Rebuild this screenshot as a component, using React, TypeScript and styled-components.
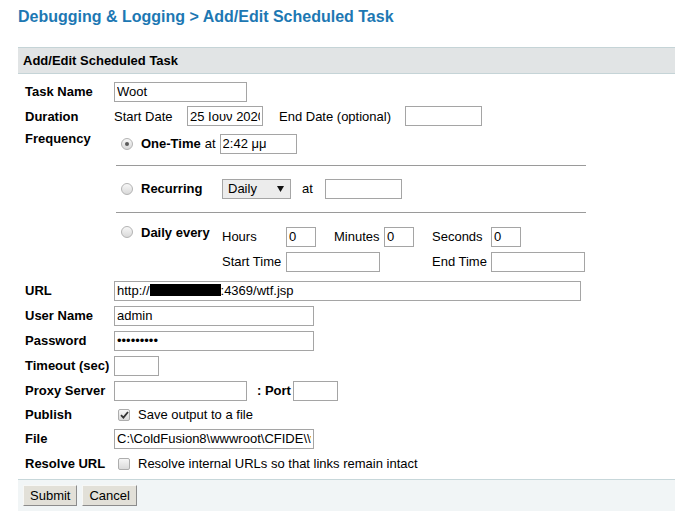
import styled, { createGlobalStyle } from "styled-components";

const GlobalStyle = createGlobalStyle`
  body {
    margin: 0;
    background: #fff;
    font-family: "Liberation Sans", Arial, sans-serif;
    font-size: 13px;
    color: #000;
  }
`;

const Page = styled.div`
  padding-left: 18px;
`;

const Title = styled.h1`
  margin: 0;
  padding-top: 7px;
  height: 40px;
  font-size: 16px;
  line-height: 20px;
  font-weight: bold;
  color: #1d78b3;
`;

const PanelHeader = styled.div`
  height: 25px;
  line-height: 25px;
  padding-left: 5px;
  font-weight: bold;
  background: #e1e4e5;
  border-top: 1px solid #c5d4d7;
  border-bottom: 1px solid #c5d4d7;
`;

const Body = styled.div`
  padding: 5px 0 3px 7px;
`;

const Row = styled.div<{ $h?: number; $top?: boolean }>`
  display: grid;
  grid-template-columns: 89px 1fr;
  align-items: ${(p) => (p.$top ? "start" : "center")};
  height: ${(p) => (p.$h ? `${p.$h}px` : "auto")};
  min-height: ${(p) => p.$h ?? 25}px;
`;

const Label = styled.div<{ $pt?: number }>`
  font-weight: bold;
  line-height: 15px;
  padding-top: ${(p) => p.$pt ?? 0}px;
`;

const Field = styled.div`
  display: flex;
  align-items: center;
`;

const TextInput = styled.input<{ $w: number }>`
  box-sizing: border-box;
  width: ${(p) => p.$w}px;
  height: 20px;
  margin: 0;
  padding: 0 2px;
  border: 1px solid #a5a5a5;
  background: #fff;
  color: #000;
  font: 13px "Liberation Sans", Arial, sans-serif;
  outline: none;
`;

const TextBox = styled.div<{ $w: number }>`
  box-sizing: border-box;
  width: ${(p) => p.$w}px;
  height: 20px;
  padding: 0 2px;
  border: 1px solid #a5a5a5;
  line-height: 18px;
  white-space: nowrap;
  overflow: hidden;
`;

const Redacted = styled.span`
  display: inline-block;
  width: 71px;
  height: 12px;
  background: #000;
  vertical-align: -1px;
`;

const Caption = styled.span<{ $w?: number; $ml?: number; $bold?: boolean }>`
  flex: none;
  width: ${(p) => (p.$w ? `${p.$w}px` : "auto")};
  margin-left: ${(p) => p.$ml ?? 0}px;
  font-weight: ${(p) => (p.$bold ? "bold" : "normal")};
  white-space: nowrap;
`;

/* frequency block */

const Options = styled.div`
  padding: 3px 0 4px;
`;

const Option = styled.div<{ $top?: boolean }>`
  display: flex;
  align-items: ${(p) => (p.$top ? "flex-start" : "center")};
  min-height: 25px;
`;

const OptionLabel = styled.div<{ $w?: number }>`
  flex: none;
  box-sizing: border-box;
  display: flex;
  align-items: center;
  width: ${(p) => (p.$w ? `${p.$w}px` : "auto")};
  height: 18px;
  padding-left: 7px;
  font-weight: bold;
  white-space: nowrap;
`;

const Radio = styled.span<{ $on?: boolean }>`
  flex: none;
  box-sizing: border-box;
  position: relative;
  width: 12px;
  height: 12px;
  margin-right: 8px;
  border-radius: 50%;
  border: 1px solid #b3b3b3;
  background: linear-gradient(#f7f7f7, #d9d9d9);
  &::after {
    content: "";
    display: ${(p) => (p.$on ? "block" : "none")};
    position: absolute;
    left: 3px;
    top: 3px;
    width: 4px;
    height: 4px;
    border-radius: 50%;
    background: #5a5a5a;
  }
`;

const Divider = styled.div<{ $mt: number }>`
  width: 470px;
  height: 1px;
  margin: ${(p) => p.$mt}px 0 10px 2px;
  background: #9a9a9a;
`;

const Select = styled.div`
  box-sizing: border-box;
  display: flex;
  align-items: center;
  justify-content: space-between;
  width: 69px;
  height: 20px;
  padding: 0 6px 0 5px;
  border: 1px solid #a5a5a5;
  background: #ececec;
`;

const DailyGrid = styled.div`
  display: grid;
  grid-template-columns: 64px 48px 50px 48px 59px 100px;
  grid-auto-rows: 25px;
  align-items: center;
  margin-top: 1px;
`;

const Span3 = styled.div`
  grid-column: span 3;
  display: flex;
`;

/* checkboxes + footer */

const Check = styled.span`
  flex: none;
  box-sizing: border-box;
  display: flex;
  align-items: center;
  justify-content: center;
  width: 12px;
  height: 12px;
  margin: 0 8px 0 4px;
  border-radius: 2px;
  border: 1px solid #adadad;
  background: linear-gradient(#f6f6f6, #dadada);
`;

const Footer = styled.div`
  display: flex;
  gap: 5px;
  padding: 5px 0 6px 5px;
  background: #f1f5f6;
  border-top: 1px solid #c7d7da;
`;

const Button = styled.button`
  height: 21px;
  margin: 0;
  padding: 0 6px;
  font: 13px "Liberation Sans", Arial, sans-serif;
  color: #000;
  background: #e2e0d8;
  border: 1px solid;
  border-color: #f7f7f5 #8c8c8c #8c8c8c #f7f7f5;
`;

const CheckMark = () => (
  <svg width="9" height="8" viewBox="0 0 9 8">
    <path d="M1 4.2 L3.4 6.6 L8 1" fill="none" stroke="#333" strokeWidth="1.8" />
  </svg>
);

const DownArrow = () => (
  <svg width="7" height="6" viewBox="0 0 7 6">
    <polygon points="0,0 7,0 3.5,6" fill="#111" />
  </svg>
);

export default function App() {
  return (
    <Page>
      <GlobalStyle />
      <Title>Debugging &amp; Logging &gt; Add/Edit Scheduled Task</Title>
      <PanelHeader>Add/Edit Scheduled Task</PanelHeader>
      <Body>
        <Row>
          <Label>Task Name</Label>
          <Field>
            <TextInput $w={133} defaultValue="Woot" />
          </Field>
        </Row>
        <Row $h={24}>
          <Label>Duration</Label>
          <Field>
            <Caption $w={73}>Start Date</Caption>
            <TextInput $w={76} defaultValue="25 Ιουν 2020" />
            <Caption $w={126} $ml={16}>End Date (optional)</Caption>
            <TextInput $w={77} />
          </Field>
        </Row>
        <Row $top>
          <Label $pt={3}>Frequency</Label>
          <Options>
            <Option>
              <OptionLabel>
                <Radio $on />
                One-Time
              </OptionLabel>
              <Caption $ml={4}>at</Caption>
              <TextInput $w={77} defaultValue="2:42 μμ" style={{ marginLeft: 4 }} />
            </Option>
            <Divider $mt={9} />
            <Option>
              <OptionLabel $w={108}>
                <Radio />
                Recurring
              </OptionLabel>
              <Select>
                <span>Daily</span>
                <DownArrow />
              </Select>
              <Caption $w={23} $ml={11}>at</Caption>
              <TextInput $w={77} />
            </Option>
            <Divider $mt={11} />
            <Option $top>
              <OptionLabel $w={108}>
                <Radio />
                Daily every
              </OptionLabel>
              <DailyGrid>
                <Caption>Hours</Caption>
                <TextInput $w={30} defaultValue="0" />
                <Caption>Minutes</Caption>
                <TextInput $w={30} defaultValue="0" />
                <Caption>Seconds</Caption>
                <TextInput $w={30} defaultValue="0" />
                <Caption>Start Time</Caption>
                <Span3>
                  <TextInput $w={94} />
                </Span3>
                <Caption>End Time</Caption>
                <TextInput $w={94} />
              </DailyGrid>
            </Option>
          </Options>
        </Row>
        <Row>
          <Label>URL</Label>
          <Field>
            <TextBox $w={467}>
              http://<Redacted />:4369/wtf.jsp
            </TextBox>
          </Field>
        </Row>
        <Row>
          <Label>User Name</Label>
          <Field>
            <TextInput $w={200} defaultValue="admin" />
          </Field>
        </Row>
        <Row>
          <Label>Password</Label>
          <Field>
            <TextInput $w={200} type="password" defaultValue="xxxxxxxxx" />
          </Field>
        </Row>
        <Row>
          <Label>Timeout (sec)</Label>
          <Field>
            <TextInput $w={45} />
          </Field>
        </Row>
        <Row>
          <Label>Proxy Server</Label>
          <Field>
            <TextInput $w={133} />
            <Caption $w={36} $ml={10} $bold>
              : Port
            </Caption>
            <TextInput $w={45} />
          </Field>
        </Row>
        <Row $h={23}>
          <Label>Publish</Label>
          <Field>
            <Check>
              <CheckMark />
            </Check>
            <Caption>Save output to a file</Caption>
          </Field>
        </Row>
        <Row>
          <Label>File</Label>
          <Field>
            <TextInput $w={200} defaultValue="C:\ColdFusion8\wwwroot\CFIDE\\wtf.txt" />
          </Field>
        </Row>
        <Row>
          <Label>Resolve URL</Label>
          <Field>
            <Check />
            <Caption>Resolve internal URLs so that links remain intact</Caption>
          </Field>
        </Row>
      </Body>
      <Footer>
        <Button>Submit</Button>
        <Button>Cancel</Button>
      </Footer>
    </Page>
  );
}
